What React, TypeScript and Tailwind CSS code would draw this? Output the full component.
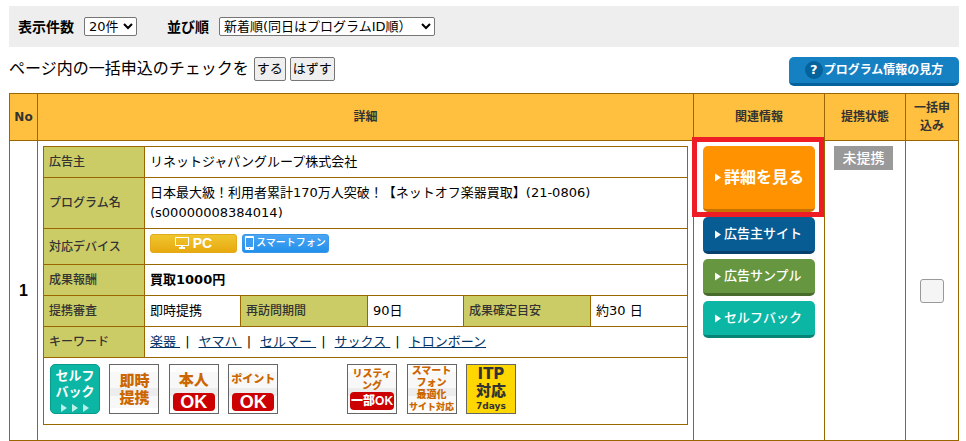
import React from 'react';

const keywords = ['楽器', 'ヤマハ', 'セルマー', 'サックス', 'トロンボーン'];

const links = [
  { label: '広告主サイト', color: 'bg-[#075c94] border-[#05406f]' },
  { label: '広告サンプル', color: 'bg-[#66963f] border-[#476b2b]' },
  { label: 'セルフバック', color: 'bg-[#0cb6a4] border-[#088476]' },
];

const line = 'border border-[#996600]';
const labelCell = `${line} bg-[#cccc66] px-[5px] text-left text-xs font-medium text-[#333333]`;
const valueCell = `${line} px-[5px]`;
const headCell = `${line} px-1 font-bold text-[#333333]`;
const badge = 'flex h-[50px] w-[50px] shrink-0 flex-col items-center overflow-hidden border border-[#666666] whitespace-nowrap font-black text-[#cc6600]';
const stripes = 'bg-[linear-gradient(#fff_7px,#f8f8f8_7px,#f8f8f8_23px,#ededed_23px,#ededed_31px,#f8f8f8_31px,#f8f8f8_43px,#fff_43px)]';
const okMark = 'mt-1 w-[42px] rounded-[4px] bg-[#cc0000] text-center font-[Liberation_Sans] text-lg leading-[18px] text-white';

const Arrow: React.FC = () => (
  <svg className="h-[9px] w-[6px] shrink-0" viewBox="0 0 6 9" fill="currentColor">
    <path d="M0 0.5L6 4.5L0 8.5Z" />
  </svg>
);

const Toolbar: React.FC = () => (
  <div className="flex h-[41px] items-center bg-[#eeeeee] pl-[9px] text-sm">
    <label htmlFor="count" className="mr-[10px] font-bold">表示件数</label>
    <select id="count" className="h-[19px] w-[53px] rounded-xs border border-[#767676] bg-white text-[13px] leading-4">
      <option>20件</option>
    </select>
    <label htmlFor="order" className="mr-[10px] ml-[30px] font-bold">並び順</label>
    <select id="order" className="h-[19px] w-[216px] rounded-xs border border-[#767676] bg-white text-[13px] leading-4">
      <option>新着順(同日はプログラムID順）</option>
    </select>
  </div>
);

const Badges: React.FC = () => (
  <div className="flex w-[466px] justify-between">
    <div className="flex h-[50px] w-[50px] flex-col items-center rounded-[5px] border border-[#0a9a8b] bg-[#0cb6a4] pt-[3px] text-[13px] leading-4 font-bold text-white">
      <span>セルフ</span>
      <span>バック</span>
      <svg className="mt-1 h-2 w-7" viewBox="0 0 28 8" fill="#b9f0e8">
        <path d="M0 0L6 4L0 8ZM11 0L17 4L11 8ZM22 0L28 4L22 8Z" />
      </svg>
    </div>
    <div className={`${badge} ${stripes} pt-2 text-[15px] leading-[17px]`}>
      <span>即時</span>
      <span>提携</span>
    </div>
    <div className={`${badge} ${stripes} pt-[6px] text-[15px] leading-[18px]`}>
      <span>本人</span>
      <span className={okMark}>OK</span>
    </div>
    <div className={`${badge} ${stripes} pt-[6px] text-[11px] leading-[18px]`}>
      <span>ポイント</span>
      <span className={okMark}>OK</span>
    </div>
    <div className="w-[50px]" />
    <div className={`${badge} ${stripes} pt-[3px] text-[10px] leading-3`}>
      <span>リスティ</span>
      <span>ング</span>
      <span className="w-11 rounded-[4px] bg-[#cc0000] text-center font-['Liberation_Sans','Noto_Sans_CJK_JP',sans-serif] text-xs leading-[18px] text-white">一部OK</span>
    </div>
    <div className={`${badge} ${stripes} text-[10px] leading-3`}>
      <span>スマート</span>
      <span>フォン</span>
      <span>最適化</span>
      <span className="text-[9px]">サイト対応</span>
    </div>
    <div className="flex h-[50px] w-[50px] flex-col items-center border border-[#666666] bg-[#ffd700] pt-px text-[15px] leading-[17px] font-black text-[#333333]">
      <span>ITP</span>
      <span>対応</span>
      <span className="text-[9px] leading-3">7days</span>
    </div>
  </div>
);

const DetailTable: React.FC = () => (
  <table className="w-full table-fixed text-[13px] leading-5">
    <colgroup>
      <col className="w-[101px]" />
      <col className="w-[96px]" />
      <col className="w-[127px]" />
      <col className="w-[96px]" />
      <col className="w-[127px]" />
      <col />
    </colgroup>
    <tbody>
      <tr className="h-[31px]">
        <th className={labelCell}>広告主</th>
        <td className={valueCell} colSpan={5}>リネットジャパングループ株式会社</td>
      </tr>
      <tr className="h-[51px]">
        <th className={labelCell}>プログラム名</th>
        <td className={valueCell} colSpan={5}>
          日本最大級！利用者累計170万人突破！【ネットオフ楽器買取】(21-0806)
          <br />
          (s00000008384014)
        </td>
      </tr>
      <tr className="h-[36px]">
        <th className={labelCell}>対応デバイス</th>
        <td className={`${valueCell} pb-[7px]`} colSpan={5}>
          <div className="flex gap-[5px] text-white">
            <span className="flex h-[19px] w-[87px] items-center justify-center gap-1 rounded-[3px] border border-[#e3aa1b] bg-linear-to-b from-[#efc62e] to-[#e8a90c] font-[Liberation_Sans] text-sm font-bold">
              <svg className="h-3 w-[14px]" viewBox="0 0 14 12" fill="none" stroke="currentColor">
                <path d="M0.5 0.5H13.5V8.5H0.5Z" />
                <path d="M7 9V11M4 11H10" strokeWidth="2" />
              </svg>
              PC
            </span>
            <span className="flex h-[19px] w-[87px] items-center justify-center gap-[2px] rounded-[3px] border border-[#3b97e8] bg-linear-to-b from-[#4aa5f4] to-[#2090ea] text-[10px] font-medium whitespace-nowrap">
              <svg className="h-[14px] w-[9px] shrink-0" viewBox="0 0 9 14">
                <rect width="9" height="14" rx="1" fill="#fff" />
                <path d="M1 2H8V11H1ZM4 12H5V13H4Z" fill="#3b9cf0" />
              </svg>
              スマートフォン
            </span>
          </div>
        </td>
      </tr>
      <tr className="h-[31px]">
        <th className={labelCell}>成果報酬</th>
        <td className={`${valueCell} font-bold`} colSpan={5}>買取1000円</td>
      </tr>
      <tr className="h-[31px]">
        <th className={labelCell}>提携審査</th>
        <td className={valueCell}>即時提携</td>
        <th className={labelCell}>再訪問期間</th>
        <td className={valueCell}>90日</td>
        <th className={labelCell}>成果確定目安</th>
        <td className={valueCell}>約30 日</td>
      </tr>
      <tr className="h-[31px]">
        <th className={labelCell}>キーワード</th>
        <td className={valueCell} colSpan={5}>
          {keywords.map((keyword, i) => (
            <React.Fragment key={keyword}>
              {i > 0 && <span className="mr-[9px] ml-[5px]">|</span>}
              <a href="#" className="whitespace-pre text-[#003366] underline">
                {i < keywords.length - 1 ? `${keyword} ` : keyword}
              </a>
            </React.Fragment>
          ))}
        </td>
      </tr>
      <tr className="h-[67px]">
        <td className={`${line} px-[6px] pt-[6px] align-top`} colSpan={6}>
          <Badges />
        </td>
      </tr>
    </tbody>
  </table>
);

export default function App() {
  return (
    <div className="bg-white pt-[6px] pr-[7px] pl-[9px] font-['DejaVu_Sans','Noto_Sans_CJK_JP',sans-serif] text-black">
      <Toolbar />

      {/* Bulk check buttons */}
      <div className="flex items-start justify-between pt-[10px] pb-[7px]">
        <div className="flex items-center gap-1">
          <span className="mr-px text-base leading-6">ページ内の一括申込のチェックを</span>
          <button className="h-6 rounded-xs border border-[#767676] bg-[#efefef] px-[2px] text-[13px] leading-5">する</button>
          <button className="h-6 rounded-xs border border-[#767676] bg-[#efefef] px-[2px] text-[13px] leading-5">はずす</button>
        </div>
        <a href="#" className="flex h-[29px] w-[170px] items-center justify-center gap-px rounded-[5px] border-b-3 border-[#04629c] bg-[#1681c2] text-xs font-bold text-white">
          <span className="flex h-[18px] w-[18px] items-center justify-center rounded-full bg-[#04629c] text-[13px]">?</span>
          プログラム情報の見方
        </a>
      </div>

      <table className="w-full table-fixed text-xs leading-[18px]">
        <colgroup>
          <col className="w-[28px]" />
          <col />
          <col className="w-[131px]" />
          <col className="w-[81px]" />
          <col className="w-[53px]" />
        </colgroup>
        <thead>
          <tr className="h-[47px] bg-[#ffc03f]">
            <th className={headCell}>No</th>
            <th className={headCell}>詳細</th>
            <th className={headCell}>関連情報</th>
            <th className={headCell}>提携状態</th>
            <th className={headCell}>一括申込み</th>
          </tr>
        </thead>
        <tbody>
          <tr>
            <td className={`${line} text-center font-[Liberation_Sans] text-base leading-[18px] font-bold`}>1</td>
            <td className={`${line} px-[5px] pt-[5px] pb-[15px] align-top`}>
              <DetailTable />
            </td>
            <td className={`${line} relative px-[9px] pt-[5px] align-top`}>
              <div className="flex flex-col gap-[5px] font-medium text-white">
                <a href="#" className="flex h-[66px] items-center gap-[3px] rounded-[5px] border-b-3 border-[#c87200] bg-[#ff9200] pl-3 text-base font-bold">
                  <Arrow />
                  詳細を見る
                </a>
                {links.map(link => (
                  <a key={link.label} href="#" className={`flex h-[37px] items-center gap-[3px] rounded-[5px] border-b-3 pl-3 text-[13px] ${link.color}`}>
                    <Arrow />
                    {link.label}
                  </a>
                ))}
              </div>
              {/* Highlight frame */}
              <div className="absolute -top-1 right-0 -left-[2px] h-20 border-5 border-[#ee1c24]" />
            </td>
            <td className={`${line} px-[9px] pt-[5px] align-top`}>
              <span className="flex h-6 w-[59px] items-center justify-center bg-[#999999] text-sm font-medium text-white">未提携</span>
            </td>
            <td className={`${line} text-center`}>
              <input type="checkbox" aria-label="一括申込み" className="h-6 w-6 appearance-none rounded-[3px] border border-[#999999] bg-[#f5f5f5] align-middle" />
            </td>
          </tr>
        </tbody>
      </table>
    </div>
  );
}
